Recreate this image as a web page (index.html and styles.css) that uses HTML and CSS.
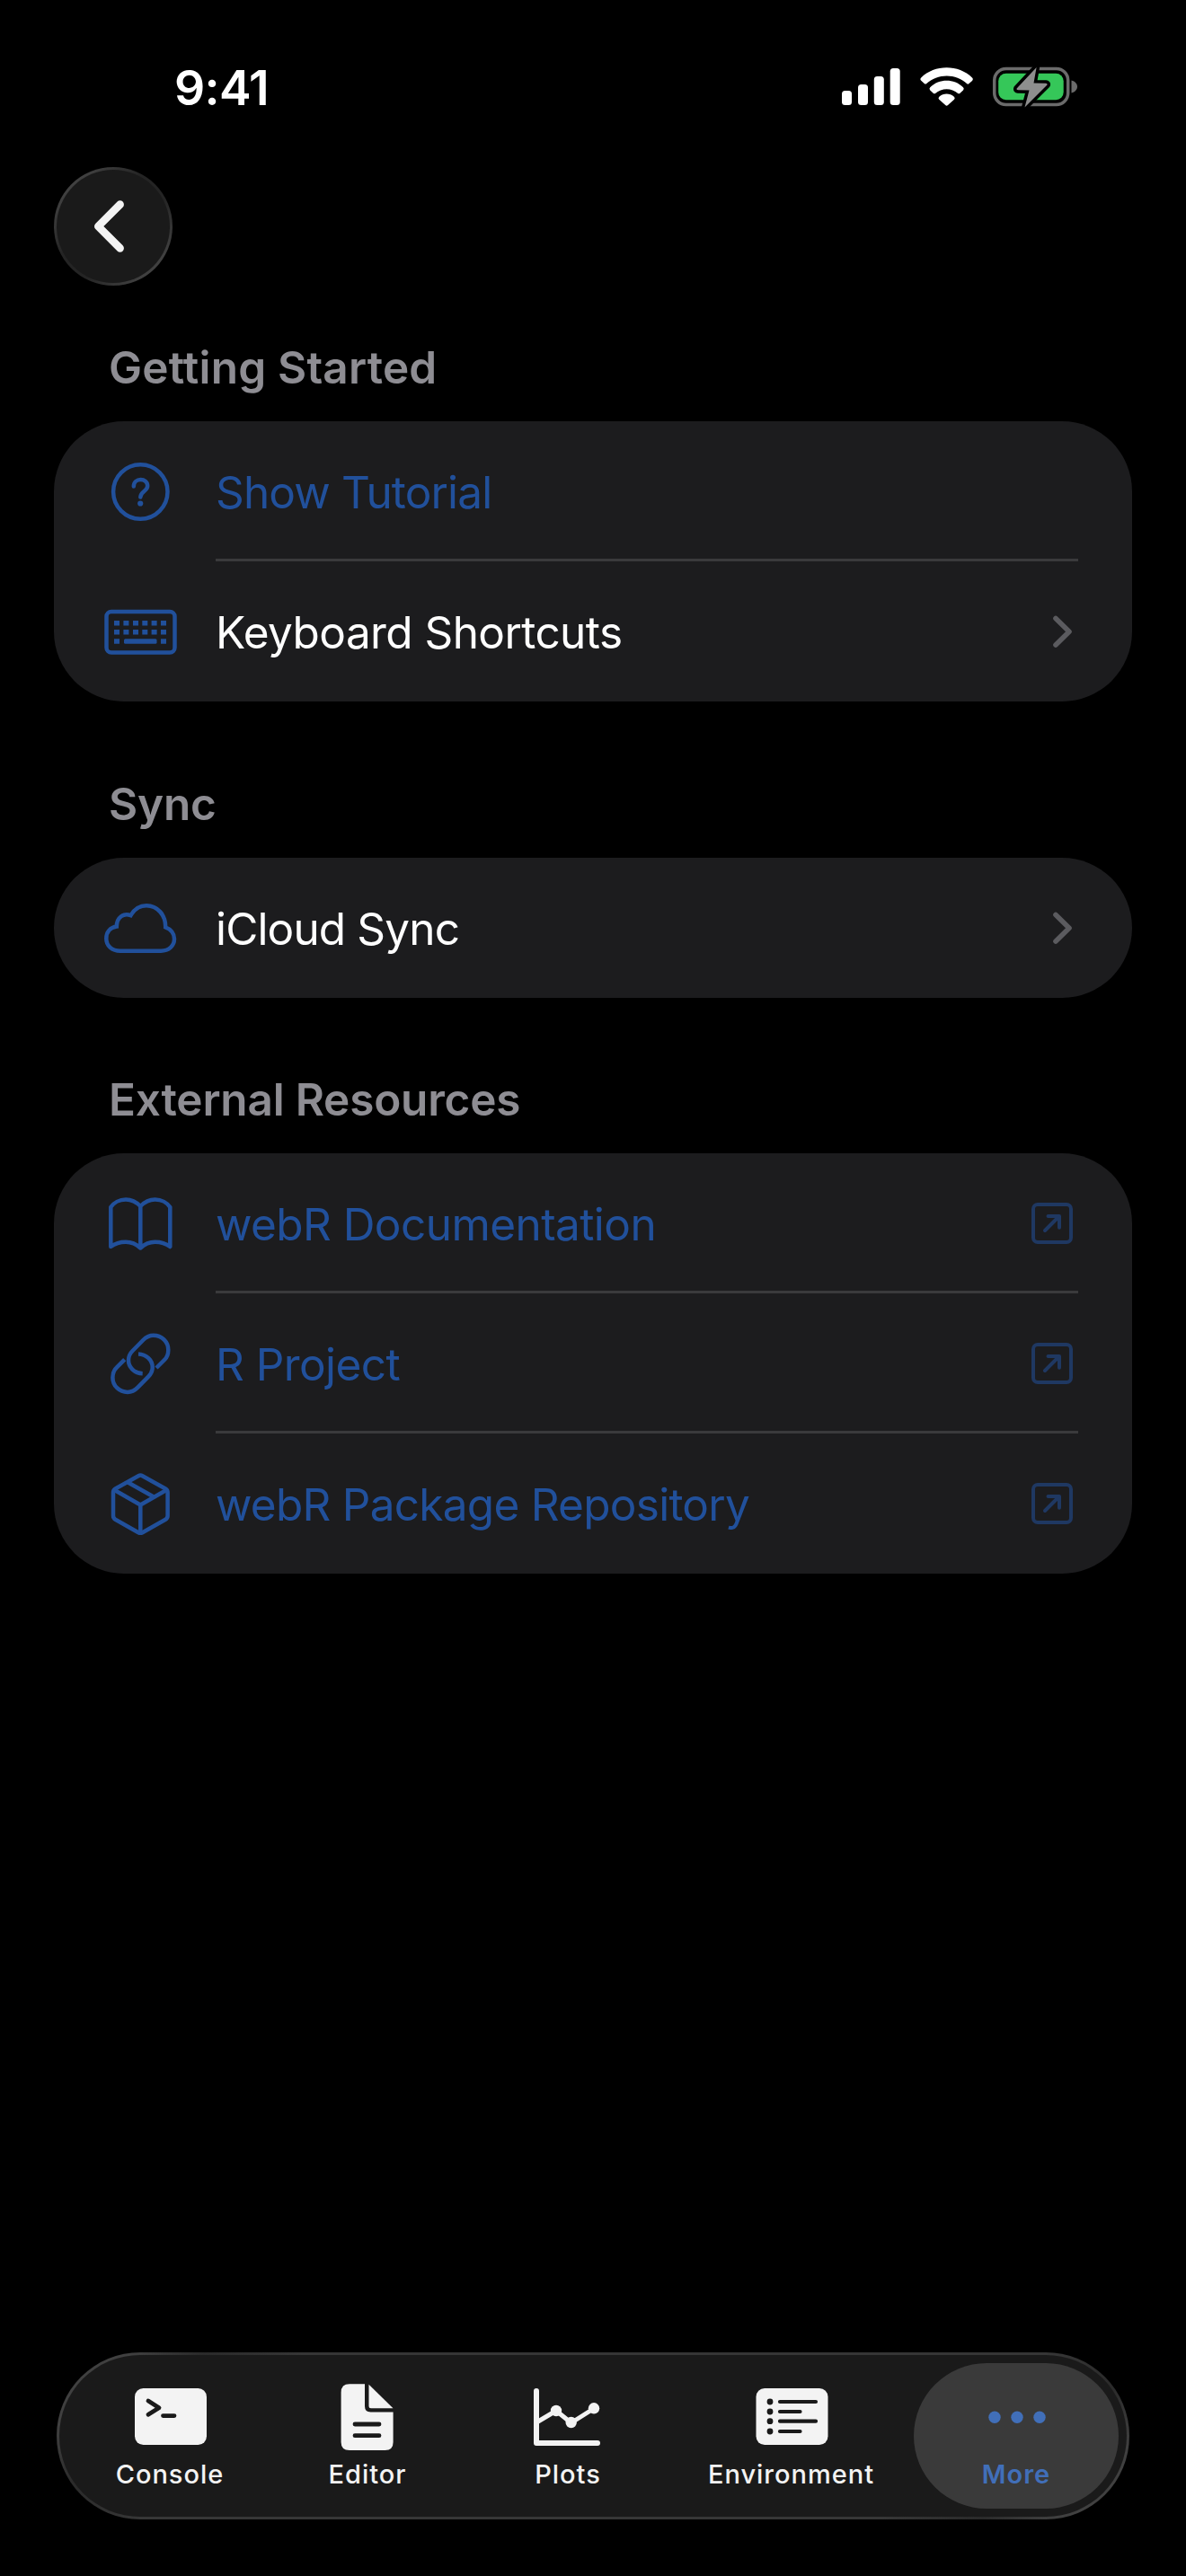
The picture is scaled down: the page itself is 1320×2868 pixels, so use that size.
FILE: index.html
```html
<!DOCTYPE html>
<html lang="en">
<head>
<meta charset="UTF-8">
<meta name="viewport" content="width=device-width, initial-scale=1.0">
<title>More</title>
<link rel="stylesheet" href="styles.css">
</head>
<body>

<header class="status-bar">
    <span class="time">9:41</span>
    <svg class="status-icons" viewBox="0 0 264 48" width="264" height="48">
        <!-- signal -->
        <g fill="#fff">
            <rect x="1" y="29" width="11" height="16" rx="3.5"/>
            <rect x="19" y="22" width="11" height="23" rx="3.5"/>
            <rect x="36.8" y="13" width="11" height="32" rx="3.5"/>
            <rect x="54.7" y="4" width="11" height="41" rx="3.5"/>
        </g>
        <!-- wifi -->
        <g fill="#fff">
            <path d="M89.2 14.6C104 -.4 131.2 -.4 146 14.6Q147.6 16.3 146 18L142.2 21.3Q141.2 22 140.3 21.2C128 9.500 107.5 9.5 95 21.2Q94 22 93 21.2L89.2 17.7Q87.6 16.2 89.2 14.6Z"/>
            <path d="M99.2 25.2C109.5 15.4 125.7 15.4 136 25.2Q137.5 26.8 136 28.4L132.2 32Q131.2 32.7 130.2 31.9C123 25.6 112.2 25.6 105 31.9Q104 32.7 103 32L99.2 28.4Q97.7 26.8 99.2 25.2Z"/>
            <path d="M109.3 35.7C114 31.4 121.2 31.4 125.9 35.7Q127.5 37.2 126 38.8L119 45Q117.6 46.3 116.2 45L109.2 38.8Q107.7 37.2 109.3 35.7Z"/>
        </g>
        <!-- battery -->
        <rect x="170.7" y="4.5" width="82" height="40" rx="13" fill="none" stroke="#6b6b6b" stroke-width="3.5"/>
        <path d="M256.5 17.5C260.5 18.5 263 21.5 263 24.5S260.5 30.5 256.5 31.5Z" fill="#6b6b6b"/>
        <rect x="175.2" y="9.7" width="72.5" height="29.5" rx="8.5" fill="#35c759"/>
        <path d="M217.6 3L195.6 26.5Q195 28 197 28.2L209.5 28.5L204.5 47.5L229.5 22.5Q230 21 228 20.8L214.5 20.5Z" fill="#8e8e8e" stroke="#000" stroke-width="7" stroke-linejoin="round" paint-order="stroke"/>
    </svg>
</header>

<nav class="nav-bar">
    <button class="back-button">
        <svg viewBox="0 0 132 132" width="126" height="126" fill="none" stroke="#f3f3f3" stroke-width="9" stroke-linecap="round" stroke-linejoin="round">
            <path d="M74 40.5L48.5 66L74 91.5"/>
        </svg>
    </button>
</nav>

<main>
    <h2 class="section-title wide">Getting Started</h2>
    <div class="card">
        <div class="row">
            <svg class="icon" viewBox="0 0 84 84">
                <circle cx="42.3" cy="42.5" r="30.2"/>
                <path d="M34.8 36.5C34.8 26.5 50.2 26.5 50.2 36C50.2 42 42.3 42 42.3 48.5"/>
                <circle class="solid" cx="42.2" cy="55.5" r="3.1"/>
            </svg>
            <div class="cell">
                <span class="label link tight">Show Tutorial</span>
            </div>
        </div>
        <div class="row">
            <svg class="icon" viewBox="0 0 84 84">
                <rect x="4.5" y="20" width="76" height="45.5" rx="5.5"/>
                <path class="keys" d="M13 32.7h6M23.4 32.7h6M34 32.7h6M44.3 32.7h6M54.6 32.7h6M65 32.7h6M13 42.7h6M23.4 42.7h6M34 42.7h6M44.3 42.7h6M54.6 42.7h6M65 42.7h6M13 53h6M65 53h6"/>
                <rect class="solid" x="24" y="50.2" width="36.5" height="5.6" rx="1.5"/>
            </svg>
            <div class="cell">
                <span class="label">Keyboard Shortcuts</span>
                <svg class="chevron" viewBox="0 0 24 40"><path d="M4 5.5L19 20.3L4 35"/></svg>
            </div>
        </div>
    </div>

    <h2 class="section-title">Sync</h2>
    <div class="card">
        <div class="row">
            <svg class="icon" viewBox="0 0 84 84">
                <path stroke-linejoin="miter" d="M20 67.7C10.5 67.7 4.3 62 4.3 54C4.3 46.5 9 41.5 15.8 40.6C15.8 30 24 25 31.5 28.2C36 20.5 42 17.3 49 17.3C61 17.3 70.5 27.5 70.2 41.3C76 43.5 80 48.5 80 54.3C80 62 74 67.7 65 67.7Z"/>
            </svg>
            <div class="cell">
                <span class="label tight">iCloud Sync</span>
                <svg class="chevron" viewBox="0 0 24 40"><path d="M4 5.5L19 20.3L4 35"/></svg>
            </div>
        </div>
    </div>

    <h2 class="section-title last-title">External Resources</h2>
    <div class="card">
        <div class="row">
            <svg class="icon" viewBox="0 0 84 84">
                <path d="M42.3 23C37 17.5 32 15.5 26 15.5C19 15.5 12.5 19 9.3 24V68C14 64.5 19.5 62.8 26 62.8C32 62.8 37.5 65 42.3 69.5C47.1 65 52.6 62.8 58.6 62.8C65.1 62.8 70.6 64.5 75.3 68V24C72.1 19 65.6 15.5 58.6 15.5C52.6 15.5 47.6 17.5 42.3 23V69"/>
            </svg>
            <div class="cell">
                <span class="label link">webR Documentation</span>
                <svg class="external" viewBox="0 0 46 46"><rect x="2" y="2" width="42" height="42" rx="5"/><path d="M15 31L30.5 15.5M18.5 15H31V27.7"/></svg>
            </div>
        </div>
        <div class="row">
            <svg class="icon chain" viewBox="0 0 84 84">
                <path d="M44.7 53.3C36 53 29 46.5 29 38.5C29 34.5 30.5 31 33.5 28L45.3 16C48.5 12.7 52 10.7 56.7 10.7C66 10.7 73.3 18 73.3 27C73.3 31.5 71.8 35.5 69 38L60 47"/>
                <path d="M40 31.4C48.7 31.7 55.7 38.2 55.7 46.2C55.7 50.2 54.2 53.7 51.2 56.7L39.4 68.7C36.2 72 32.7 74 28 74C18.7 74 11.4 66.7 11.4 57.7C11.4 53.2 12.9 49.2 15.7 46.7L24.7 37.7"/>
            </svg>
            <div class="cell">
                <span class="label link">R Project</span>
                <svg class="external" viewBox="0 0 46 46"><rect x="2" y="2" width="42" height="42" rx="5"/><path d="M15 31L30.5 15.5M18.5 15H31V27.7"/></svg>
            </div>
        </div>
        <div class="row">
            <svg class="icon" viewBox="0 0 84 84">
                <path d="M40 11.2Q42.3 9.9 44.6 11.2L70.2 25.5Q72.6 27 72.6 29.5V55.5Q72.6 58.3 70.2 59.8L44.6 74.2Q42.3 75.5 40 74.2L14.4 59.8Q12 58.3 12 55.5V29.5Q12 27 14.4 25.5Z"/>
                <path d="M13.5 27L42.3 43.5L71.1 27M42.3 43.5V74M28.5 18.5L57 34.5"/>
            </svg>
            <div class="cell">
                <span class="label link snug">webR Package Repository</span>
                <svg class="external" viewBox="0 0 46 46"><rect x="2" y="2" width="42" height="42" rx="5"/><path d="M15 31L30.5 15.5M18.5 15H31V27.7"/></svg>
            </div>
        </div>
    </div>
</main>

<nav class="tab-bar">
    <a class="tab tab-console">
        <svg viewBox="0 0 84 80">
            <rect class="fill" x="3" y="8" width="80" height="63" rx="9.5"/>
            <path class="cut" d="M18 22L30 29.7L18 37.3M34.5 38.6H47"/>
        </svg>
        <span>Console</span>
    </a>
    <a class="tab tab-editor">
        <svg viewBox="0 0 84 80">
            <path class="fill" d="M22 3.3H39V28Q39 34.5 45.5 34.5H70.6V68Q70.6 77 61.6 77H22Q12.6 77 12.6 68V12.7Q12.6 3.3 22 3.3Z"/>
            <path class="fill" d="M43.5 3.8L70.5 30.3H46Q43.5 30.3 43.5 27.8Z"/>
            <path class="cut" d="M28 48H55M28 60.7H55"/>
        </svg>
        <span>Editor</span>
    </a>
    <a class="tab tab-plots">
        <svg viewBox="0 0 84 80">
            <path class="line" d="M7 11V69H75"/>
            <path class="line thin" d="M8 45.5L29 33L45.7 46.5L71 30.5"/>
            <circle class="fill" cx="29" cy="33" r="6.2"/>
            <circle class="fill" cx="45.7" cy="46" r="6.2"/>
            <circle class="fill" cx="71" cy="30.3" r="6.2"/>
        </svg>
        <span>Plots</span>
    </a>
    <a class="tab tab-environment">
        <svg viewBox="0 0 84 80">
            <rect class="fill" x="2.5" y="8" width="80" height="63" rx="9.5"/>
            <path class="cut dots" d="M18 23h0M18 34h0M18 44.7h0M18 56h0"/>
            <path class="cut thin" d="M29 23H69M29 34H51.5M29 44.7H69M29 56H51.5"/>
        </svg>
        <span>Environment</span>
    </a>
    <a class="tab tab-more active">
        <svg viewBox="0 0 84 80">
            <circle cx="18" cy="40.3" r="6.7"/>
            <circle cx="43" cy="40.3" r="6.7"/>
            <circle cx="68" cy="40.3" r="6.7"/>
        </svg>
        <span>More</span>
    </a>
</nav>

</body>
</html>
```
FILE: styles.css
```css
* {
    box-sizing: border-box;
}
body {
    background-color: #000000;
    color: #ffffff;
    font-family: Inter, "Liberation Sans", sans-serif;
    margin: 0;
    height: 2868px;
    display: flex;
    flex-direction: column;
}
.status-bar {
    display: flex;
    justify-content: space-between;
    align-items: flex-start;
    height: 186px;
    padding: 72px 120px 0 194px;
}
.time {
    font-size: 53.5px;
    font-weight: 600;
    line-height: 52px;
    letter-spacing: -0.7px;
}
.nav-bar {
    height: 162px;
    padding-left: 60px;
}
.back-button {
    display: flex;
    width: 132px;
    height: 132px;
    padding: 0;
    border: 3px solid transparent;
    border-radius: 50%;
    background: linear-gradient(#1a1a1a, #1a1a1a) padding-box,
        linear-gradient(135deg, #474747 10%, #242424 40%, #242424 60%, #474747 90%) border-box;
}
.section-title {
    color: #8e8d93;
    font-size: 49.5px;
    font-weight: 600;
    line-height: 120px;
    letter-spacing: -0.2px;
    margin: 53px 0 0;
    padding: 1px 0 0 121px;
}
.section-title:first-child {
    margin-top: 0;
}
.section-title.wide {
    letter-spacing: 0.2px;
}
.last-title {
    margin-top: 52px;
}
.card {
    background-color: #1c1c1e;
    border-radius: 78px;
    margin: 0 60px;
}
.row {
    display: flex;
    align-items: center;
    height: 156px;
    padding: 0 60px 0 54px;
}
.icon {
    flex: none;
    width: 84px;
    height: 84px;
    margin-right: 42px;
    fill: none;
    stroke: #21509b;
    stroke-width: 4.5;
    stroke-linecap: round;
    stroke-linejoin: round;
}
.icon .solid {
    fill: #21509b;
    stroke: none;
}
.icon .keys {
    stroke-width: 5.6;
    stroke-linecap: butt;
}
.chain {
    stroke-linecap: butt;
}
.cell {
    display: flex;
    flex: 1;
    align-items: center;
    justify-content: space-between;
    height: 156px;
    border-bottom: 3px solid #3a3a3c;
    padding-top: 3px;
}
.row:last-child .cell {
    border-bottom: none;
    padding-top: 0;
}
.label {
    font-size: 49.5px;
    line-height: 60px;
    letter-spacing: -0.57px;
    padding-top: 1px;
    white-space: nowrap;
}
.label.snug {
    letter-spacing: -0.74px;
}
.label.tight {
    letter-spacing: -0.85px;
}
.link {
    color: #21509b;
}
.chevron {
    width: 24px;
    height: 40px;
    margin-right: 5px;
    fill: none;
    stroke: #5b5b5f;
    stroke-width: 5.6;
    stroke-linecap: round;
    stroke-linejoin: round;
}
.external {
    width: 46px;
    height: 46px;
    margin-right: 6px;
    fill: none;
    stroke: #1f3862;
    stroke-width: 4;
    stroke-linecap: round;
    stroke-linejoin: round;
}
.tab-bar {
    display: flex;
    width: 1194px;
    height: 186px;
    margin: auto 63px 63px;
    padding: 9px;
    border: 3px solid transparent;
    border-radius: 93px;
    background: linear-gradient(#1a1a1a, #1a1a1a) padding-box,
        linear-gradient(135deg, #404040 6%, #2a2a2a 12%, #363636 20%, #363636 80%, #2a2a2a 88%, #404040 94%) border-box;
}
.tab {
    display: flex;
    flex-direction: column;
    align-items: center;
    height: 162px;
    padding-top: 20px;
    border-radius: 81px;
    color: #f3f3f3;
    font-size: 29px;
    font-weight: 500;
    line-height: 48px;
    letter-spacing: 1px;
}
.tab svg {
    width: 84px;
    height: 80px;
}
.tab .fill {
    fill: #f3f3f3;
}
.tab .cut {
    fill: none;
    stroke: #1a1a1a;
    stroke-width: 4.8;
    stroke-linecap: round;
    stroke-linejoin: round;
}
.tab .cut.thin {
    stroke-width: 4.2;
}
.tab .cut.dots {
    stroke-width: 6.8;
}
.tab .line {
    fill: none;
    stroke: #f3f3f3;
    stroke-width: 6;
    stroke-linecap: round;
    stroke-linejoin: round;
}
.tab .line.thin {
    stroke-width: 5;
}
.tab-console {
    width: 228px;
}
.tab-editor {
    width: 212px;
}
.tab-plots {
    width: 234px;
}
.tab-environment {
    width: 263px;
}
.tab-more {
    width: 228px;
    margin-left: auto;
    background-color: #3a3a3a;
    color: #416fb9;
    fill: #416fb9;
    font-weight: 600;
}
```
